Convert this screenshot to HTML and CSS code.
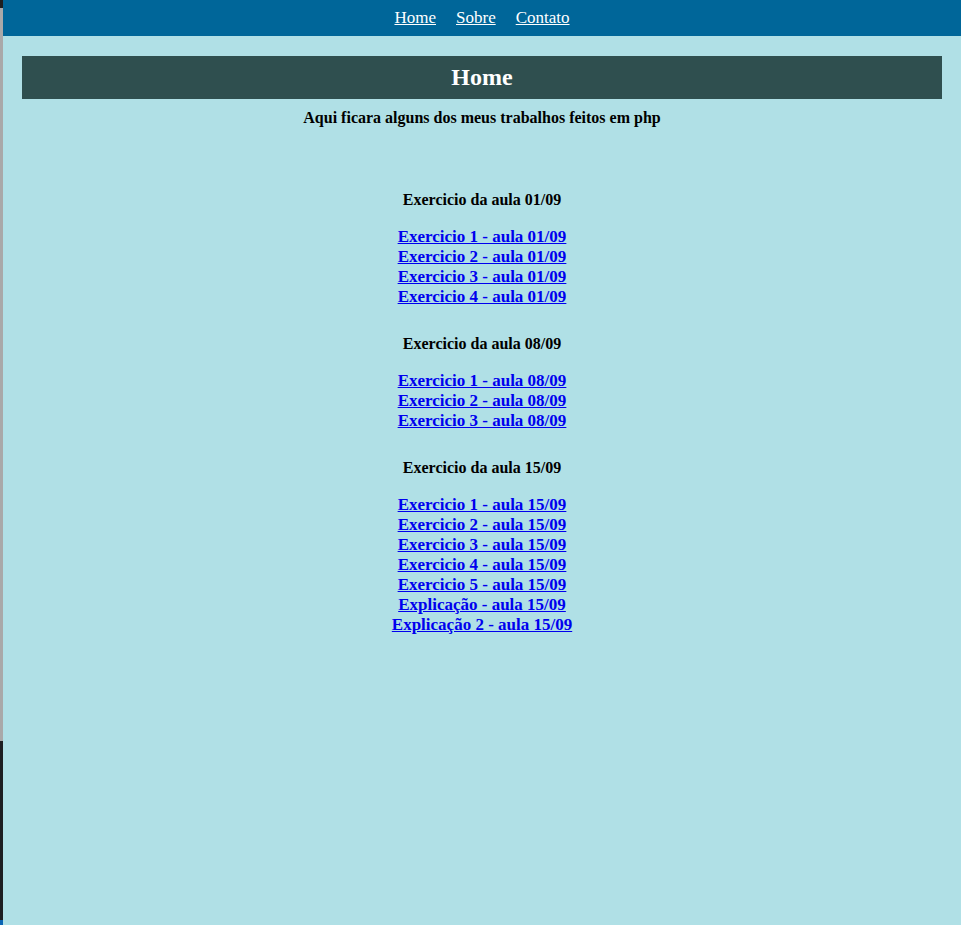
FILE: index.html
```html
<!DOCTYPE html>
<html lang="pt-BR">
<head>
<meta charset="utf-8">
<title>Home</title>
<link rel="stylesheet" href="styles.css">
</head>
<body>
<nav class="topnav">
  <a href="#">Home</a>
  <a href="#">Sobre</a>
  <a href="#">Contato</a>
</nav>
<main class="content">
  <h1 class="page-title">Home</h1>
  <p class="intro">Aqui ficara alguns dos meus trabalhos feitos em php</p>

  <section class="group">
    <h2 class="group-title">Exercicio da aula 01/09</h2>
    <ul class="links">
      <li><a href="#">Exercicio 1 - aula 01/09</a></li>
      <li><a href="#">Exercicio 2 - aula 01/09</a></li>
      <li><a href="#">Exercicio 3 - aula 01/09</a></li>
      <li><a href="#">Exercicio 4 - aula 01/09</a></li>
    </ul>
  </section>

  <section class="group">
    <h2 class="group-title">Exercicio da aula 08/09</h2>
    <ul class="links">
      <li><a href="#">Exercicio 1 - aula 08/09</a></li>
      <li><a href="#">Exercicio 2 - aula 08/09</a></li>
      <li><a href="#">Exercicio 3 - aula 08/09</a></li>
    </ul>
  </section>

  <section class="group">
    <h2 class="group-title">Exercicio da aula 15/09</h2>
    <ul class="links">
      <li><a href="#">Exercicio 1 - aula 15/09</a></li>
      <li><a href="#">Exercicio 2 - aula 15/09</a></li>
      <li><a href="#">Exercicio 3 - aula 15/09</a></li>
      <li><a href="#">Exercicio 4 - aula 15/09</a></li>
      <li><a href="#">Exercicio 5 - aula 15/09</a></li>
      <li><a href="#">Explicação - aula 15/09</a></li>
      <li><a href="#">Explicação 2 - aula 15/09</a></li>
    </ul>
  </section>
</main>
</body>
</html>
```

FILE: styles.css
```css
html {
  background: linear-gradient(to bottom, #1f1f1f 0, #1f1f1f 8px, #a9a9a9 8px, #a9a9a9 741px, #1e1f22 741px, #1e1f22 920px, #0a64b4 920px);
  min-height: 100%;
}

body {
  margin: 0 0 0 3px;
  min-height: 925px;
  background: #b0e0e6;
  font-family: "Liberation Serif", "Times New Roman", serif;
  font-size: 16px;
  line-height: 20px;
  color: #000;
}

.topnav {
  height: 36px;
  background: #006699;
  display: flex;
  justify-content: center;
  align-items: center;
  gap: 20px;
}

.topnav a {
  color: #fff;
  font-size: 17px;
  text-decoration: underline;
}

.content {
  margin: 0 19px;
  padding-top: 20px;
  text-align: center;
}

.page-title {
  margin: 0;
  height: 43px;
  line-height: 43px;
  background: #2f4f4f;
  color: #fff;
  font-size: 24px;
  font-weight: bold;
}

.intro {
  margin: 9px 0 0;
  font-weight: bold;
}

.group {
  margin-top: 27px;
}

.group:first-of-type {
  margin-top: 62px;
}

.group-title {
  margin: 0;
  font-size: 16px;
  font-weight: bold;
}

.links {
  list-style: none;
  margin: 17px 0 0;
  padding: 0;
}

.links a {
  color: #0000ee;
  font-size: 17px;
  font-weight: bold;
  text-decoration: underline;
}
```
